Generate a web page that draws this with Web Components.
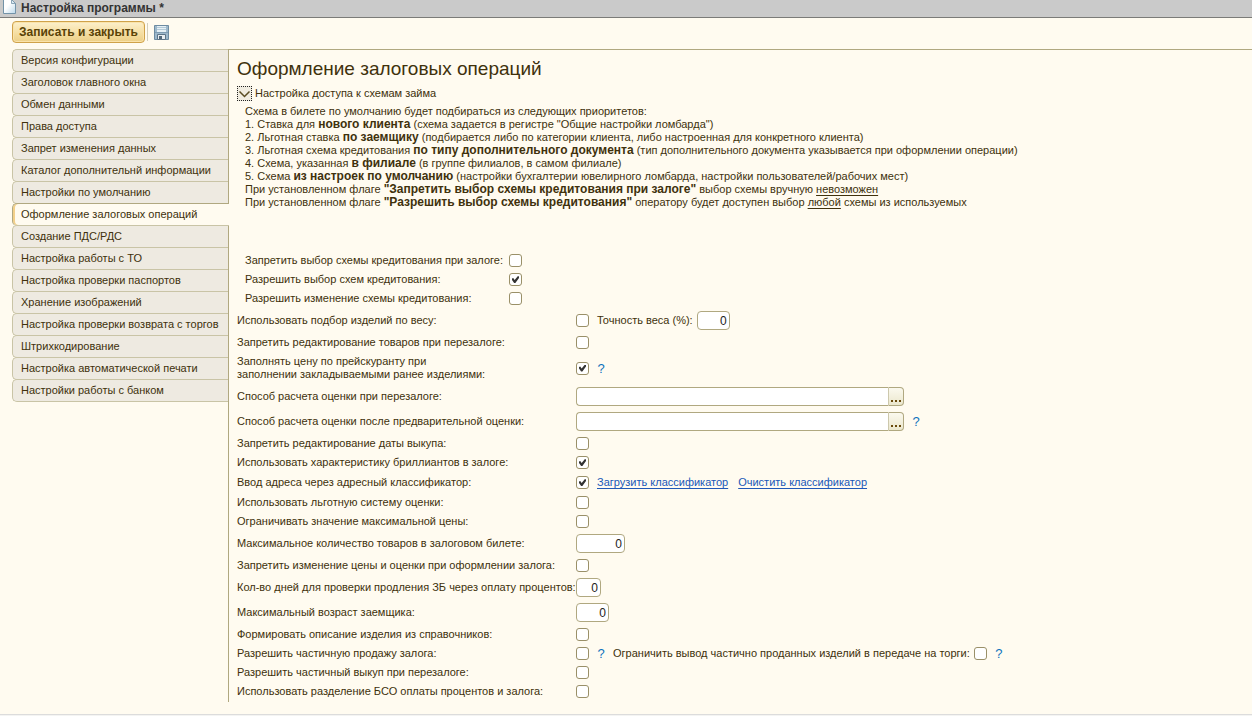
<!DOCTYPE html>
<html lang="ru">
<head>
<meta charset="utf-8">
<meta name="viewport" content="width=device-width, initial-scale=1">
<title>Настройка программы</title>
<style>
  html {
    --page: #fffbf0;
    --ink: #40310c;
    --line: #b0a880;
    --tab-line: #c9c4a6;
    --tab: #eeeae1;
    --box-line: #9a9068;
    --label-width: 335px;
    --gap: 6px;
  }
  body { margin: 0; background: var(--page); color: var(--ink); font: 11px/13px "Liberation Sans", Arial, sans-serif; }
</style>
</head>
<body>
<app-window caption="Настройка программы *">
  <tool-bar slot="tools"></tool-bar>
  <side-tabs slot="nav">
    <side-tab>Версия конфигурации</side-tab>
    <side-tab>Заголовок главного окна</side-tab>
    <side-tab>Обмен данными</side-tab>
    <side-tab>Права доступа</side-tab>
    <side-tab>Запрет изменения данных</side-tab>
    <side-tab>Каталог дополнительнй информации</side-tab>
    <side-tab>Настройки по умолчанию</side-tab>
    <side-tab selected>Оформление залоговых операций</side-tab>
    <side-tab>Создание ПДС/РДС</side-tab>
    <side-tab>Настройка работы с ТО</side-tab>
    <side-tab>Настройка проверки паспортов</side-tab>
    <side-tab>Хранение изображений</side-tab>
    <side-tab>Настройка проверки возврата с торгов</side-tab>
    <side-tab>Штрихкодирование</side-tab>
    <side-tab>Настройка автоматической печати</side-tab>
    <side-tab>Настройки работы с банком</side-tab>
  </side-tabs>
  <settings-panel heading="Оформление залоговых операций">
    <collapsible-group caption="Настройка доступа к схемам займа">
      <scheme-notes slot="notes"></scheme-notes>
      <setting-field label="Запретить выбор схемы кредитования при залоге:"></setting-field>
      <setting-field label="Разрешить выбор схем кредитования:" checked></setting-field>
      <setting-field label="Разрешить изменение схемы кредитования:"></setting-field>
    </collapsible-group>
    <setting-field label="Использовать подбор изделий по весу:">
      <setting-field inline label="Точность веса (%):" kind="number" size="m"></setting-field>
    </setting-field>
    <setting-field label="Запретить редактирование товаров при перезалоге:"></setting-field>
    <setting-field label="Заполнять цену по прейскуранту при&#10;заполнении закладываемыми ранее изделиями:" checked help></setting-field>
    <setting-field label="Способ расчета оценки при перезалоге:" kind="lookup"></setting-field>
    <setting-field label="Способ расчета оценки после предварительной оценки:" kind="lookup" help></setting-field>
    <setting-field label="Запретить редактирование даты выкупа:"></setting-field>
    <setting-field label="Использовать характеристику бриллиантов в залоге:" checked></setting-field>
    <setting-field label="Ввод адреса через адресный классификатор:" checked>
      <action-link>Загрузить классификатор</action-link>
      <action-link>Очистить классификатор</action-link>
    </setting-field>
    <setting-field label="Использовать льготную систему оценки:"></setting-field>
    <setting-field label="Ограничивать значение максимальной цены:"></setting-field>
    <setting-field label="Максимальное количество товаров в залоговом билете:" kind="number" size="l"></setting-field>
    <setting-field label="Запретить изменение цены и оценки при оформлении залога:"></setting-field>
    <setting-field label="Кол-во дней для проверки продления ЗБ через оплату процентов:" kind="number" size="s"></setting-field>
    <setting-field label="Максимальный возраст заемщика:" kind="number" size="m"></setting-field>
    <setting-field label="Формировать описание изделия из справочников:"></setting-field>
    <setting-field label="Разрешить частичную продажу залога:" help>
      <setting-field inline label="Ограничить вывод частично проданных изделий в передаче на торги:" help></setting-field>
    </setting-field>
    <setting-field label="Разрешить частичный выкуп при перезалоге:"></setting-field>
    <setting-field label="Использовать разделение БСО оплаты процентов и залога:"></setting-field>
  </settings-panel>
</app-window>

<template id="app-window">
  <style>
    :host { display: flex; flex-direction: column; min-height: 100vh; }
    header { display: flex; align-items: flex-start; gap: 5px; height: 17px; padding-left: 3px; background: #cacaca; border-bottom: 1px solid #7b7b78; }
    svg { display: block; flex: none; }
    h1 { margin: 0; font-size: 12px; line-height: 16px; color: #333; white-space: nowrap; }
    .body { flex: 1; display: grid; grid-template-columns: 216px minmax(0, 1fr); align-items: start; padding: 0 0 12px 12px; }
    footer { border-top: 1px solid #dcdcdc; height: 1px; background: #f4f4f2; }
  </style>
  <header>
    <svg width="13" height="14" viewBox="0 0 13 14" aria-hidden="true">
      <defs><linearGradient id="p" x1="0" y1="0" x2="1" y2="1"><stop offset=".4" stop-color="#fff"/><stop offset="1" stop-color="#bcd8ea"/></linearGradient></defs>
      <path d="M.5-.5h8l4 4v10H.5z" fill="url(#p)" stroke="#7393a8"/>
      <path d="M8.500-.5v4h4z" fill="#dcebf4" stroke="#7393a8" stroke-width=".8"/>
    </svg>
    <h1></h1>
  </header>
  <slot name="tools"></slot>
  <div class="body"><slot name="nav"></slot><slot></slot></div>
  <footer></footer>
</template>

<template id="tool-bar">
  <style>
    :host { display: flex; align-items: center; padding: 3px 12px 6px; }
    button { font: inherit; margin: 0; cursor: pointer; }
    .main { height: 22px; padding: 0 6px; font-size: 12px; font-weight: bold; line-height: 18px; color: #5a4206; white-space: nowrap;
      border: 1px solid #cfa24a; border-radius: 4px; background: linear-gradient(#fcf0cc, #f6e0a6 50%, #eccf86); box-shadow: inset 0 0 0 1px #fae3ab; }
    .sep { width: 1px; height: 18px; margin: 0 6px 0 2px; background: #d2cebc; }
    .icon { padding: 0; border: 0; background: none; }
    svg { display: block; }
  </style>
  <button class="main" type="button">Записать и закрыть</button>
  <span class="sep"></span>
  <button class="icon" type="button" aria-label="Записать">
    <svg width="15" height="15" viewBox="0 0 15 15">
      <path d="M.5.5h14v14H.5z" fill="#9db8cb" stroke="#6d8ba1"/>
      <path d="M3 1h9v6H3z" fill="#e6f0f5"/>
      <path d="M3 2.500h9M3 4.500h9" stroke="#b3cad8"/>
      <path d="M1 7.500h13" stroke="#7f9cb2"/>
      <path d="M3.500 9.500h8v5h-8z" fill="#e9eef1" stroke="#5d7487"/>
      <path d="M5 11h3v3H5z" fill="#52687a"/>
    </svg>
  </button>
</template>

<template id="side-tabs">
  <style>:host { display: block; position: relative; z-index: 1; }</style>
  <slot></slot>
</template>

<template id="side-tab">
  <style>
    :host { display: block; margin-bottom: -1px; }
    button { display: block; box-sizing: border-box; width: 100%; height: 23px; margin: 0; padding: 0 0 0 8px; font: inherit; line-height: 21px; text-align: left; white-space: nowrap; color: inherit;
      background: var(--tab); border: 1px solid var(--tab-line); border-right: 0; border-radius: 5px 0 0 5px; }
    :host([selected]) { position: relative; margin-right: -1px; }
    :host([selected]) button { background: var(--page); border-color: var(--line); border-bottom-color: var(--tab-line); box-shadow: inset 2px 0 #f3d08a; }
  </style>
  <button type="button" role="tab"><slot></slot></button>
</template>

<template id="settings-panel">
  <style>
    :host { display: flex; flex-direction: column; gap: var(--gap); padding: 7px 8px 4px; border: solid var(--line); border-width: 1px 0 0 1px; }
    h2 { margin: 0 0 -1px; font-size: 19px; font-weight: normal; line-height: 24px; }
  </style>
  <h2></h2>
  <slot></slot>
</template>

<template id="collapsible-group">
  <style>
    :host { display: block; }
    .head { display: flex; align-items: center; gap: 3px; }
    button { box-sizing: border-box; width: 15px; height: 15px; margin: 0; padding: 0; border: 1px dotted #222; background: #f1ede1; }
    svg { display: block; }
    .content { --label-width: 260px; display: flex; flex-direction: column; gap: var(--gap); padding: 4px 0 0 8px; }
  </style>
  <div class="head">
    <button type="button" aria-expanded="true" aria-labelledby="cap"><svg width="13" height="13" viewBox="0 0 13 13"><path d="M1.500 4.500l5 5 5-5" fill="none" stroke="#5a4c22" stroke-width="1.500"/></svg></button>
    <span id="cap"></span>
  </div>
  <div class="content"><slot name="notes"></slot><slot></slot></div>
</template>

<template id="scheme-notes">
  <style>
    :host { display: block; margin-bottom: 39px; }
    p { margin: 0; }
    b { font-size: 12px; line-height: 0; }
    u { text-underline-offset: 2px; }
  </style>
  <p>Схема в билете по умолчанию будет подбираться из следующих приоритетов:</p>
  <p>1. Ставка для <b>нового клиента</b> (схема задается в регистре "Общие настройки ломбарда")</p>
  <p>2. Льготная ставка <b>по заемщику</b> (подбирается либо по категории клиента, либо настроенная для конкретного клиента)</p>
  <p>3. Льготная схема кредитования <b>по типу дополнительного документа</b> (тип дополнительного документа указывается при оформлении операции)</p>
  <p>4. Схема, указанная <b>в филиале</b> (в группе филиалов, в самом филиале)</p>
  <p>5. Схема <b>из настроек по умолчанию</b> (настройки бухгалтерии ювелирного ломбарда, настройки пользователей/рабочих мест)</p>
  <p>При установленном флаге <b>"Запретить выбор схемы кредитования при залоге"</b> выбор схемы вручную <u>невозможен</u></p>
  <p>При установленном флаге <b>"Разрешить выбор схемы кредитования"</b> оператору будет доступен выбор <u>любой</u> схемы из используемых</p>
</template>

<template id="setting-field">
  <style>
    :host { display: flex; align-items: center; gap: 8px; }
    .pair { display: flex; align-items: center; gap: 4px; }
    label { flex: none; width: var(--label-width); white-space: pre; }
    :host([inline]) label { width: auto; }
    input { box-sizing: border-box; margin: 0; font: inherit; color: #222; background: #fff; outline: 0; }
    input[type=checkbox] { appearance: none; display: grid; place-items: center; flex: none; width: 13px; height: 13px; border: 1px solid var(--box-line); border-radius: 3px; }
    input[type=checkbox]:checked::before { content: ""; width: 7px; height: 7px; background: #333; clip-path: polygon(0 35%, 18% 30%, 38% 58%, 85% 0, 100% 6%, 100% 30%, 48% 100%, 30% 100%, 0 58%); }
    input[type=text] { height: 19px; border: 1px solid var(--line); border-radius: 4px; font-size: 12px; padding: 0 2px; }
    .number { text-align: right; }
    .s { width: 25px; } .m { width: 33px; } .l { width: 49px; }
    .lookup { display: flex; width: 328px; }
    .lookup input { flex: 1; min-width: 0; border-radius: 4px 0 0 4px; border-right: 0; }
    .lookup button { box-sizing: border-box; width: 16px; height: 19px; margin: 0; padding: 0; display: flex; align-items: flex-end; justify-content: center;
      border: 1px solid var(--line); border-left-color: #cdc8ac; border-radius: 0 4px 4px 0; background: linear-gradient(#fbf9ee, #ebe7cd); }
    .help { padding: 0; border: 0; margin: 0; width: 8px; background: none; font: inherit; font-size: 13px; color: #0f74bd; line-height: 13px; }
    svg { display: block; margin-bottom: 3px; }
  </style>
  <div class="pair"><label for="field"></label></div>
  <slot></slot>
</template>

<template id="action-link">
  <style>
    :host { display: block; margin-right: 2px; }
    a { display: block; line-height: 15px; color: #2058b8; white-space: nowrap; text-decoration: underline; text-underline-offset: 2px; }
  </style>
  <a href="#"><slot></slot></a>
</template>

<script>
  class Part extends HTMLElement {
    constructor() {
      super();
      const template = document.getElementById(this.localName);
      this.attachShadow({ mode: 'open' }).append(template.content.cloneNode(true));
    }
    $(selector) { return this.shadowRoot.querySelector(selector); }
  }

  class AppWindow extends Part {
    connectedCallback() { this.$('h1').textContent = this.getAttribute('caption'); }
  }

  class SideTabs extends Part {
    connectedCallback() {
      this.setAttribute('role', 'tablist');
      this.addEventListener('click', (event) => {
        const tab = event.target.closest('side-tab');
        if (!tab) return;
        this.querySelectorAll('side-tab').forEach((t) => t.toggleAttribute('selected', t === tab));
      });
    }
  }

  class SideTab extends Part {
    static observedAttributes = ['selected'];
    attributeChangedCallback() { this.$('button').setAttribute('aria-selected', this.hasAttribute('selected')); }
  }

  class SettingsPanel extends Part {
    connectedCallback() { this.$('h2').textContent = this.getAttribute('heading'); }
  }

  class CollapsibleGroup extends Part {
    connectedCallback() {
      this.$('#cap').textContent = this.getAttribute('caption');
      this.$('button').onclick = () => {
        const content = this.$('.content');
        const hidden = content.style.display !== 'none';
        content.style.display = hidden ? 'none' : '';
        this.$('button').setAttribute('aria-expanded', !hidden);
      };
    }
  }

  class SettingField extends Part {
    connectedCallback() {
      this.$('label').textContent = this.getAttribute('label');
      const input = document.createElement('input');
      const kind = this.getAttribute('kind') || 'check';
      input.id = 'field';
      input.type = kind === 'check' ? 'checkbox' : 'text';
      let control = input;
      if (kind === 'check') {
        input.checked = this.hasAttribute('checked');
      } else if (kind === 'number') {
        input.value = '0';
        input.inputMode = 'numeric';
        input.className = 'number ' + this.getAttribute('size');
      } else {
        control = document.createElement('div');
        control.className = 'lookup';
        control.append(input);
        control.insertAdjacentHTML('beforeend',
          '<button type="button" aria-label="Выбрать"><svg width="10" height="2" viewBox="0 0 10 2"><path d="M0 0h2v2H0zM4 0h2v2H4zM8 0h2v2H8z" fill="#6a4a0c"/></svg></button>');
      }
      this.$('.pair').append(control);
      if (this.hasAttribute('help')) {
        this.$('.pair').insertAdjacentHTML('afterend', '<button class="help" type="button">?</button>');
      }
    }
  }

  customElements.define('app-window', AppWindow);
  customElements.define('tool-bar', class extends Part {});
  customElements.define('side-tabs', SideTabs);
  customElements.define('side-tab', SideTab);
  customElements.define('settings-panel', SettingsPanel);
  customElements.define('collapsible-group', CollapsibleGroup);
  customElements.define('scheme-notes', class extends Part {});
  customElements.define('setting-field', SettingField);
  customElements.define('action-link', class extends Part {});
</script>
</body>
</html>
